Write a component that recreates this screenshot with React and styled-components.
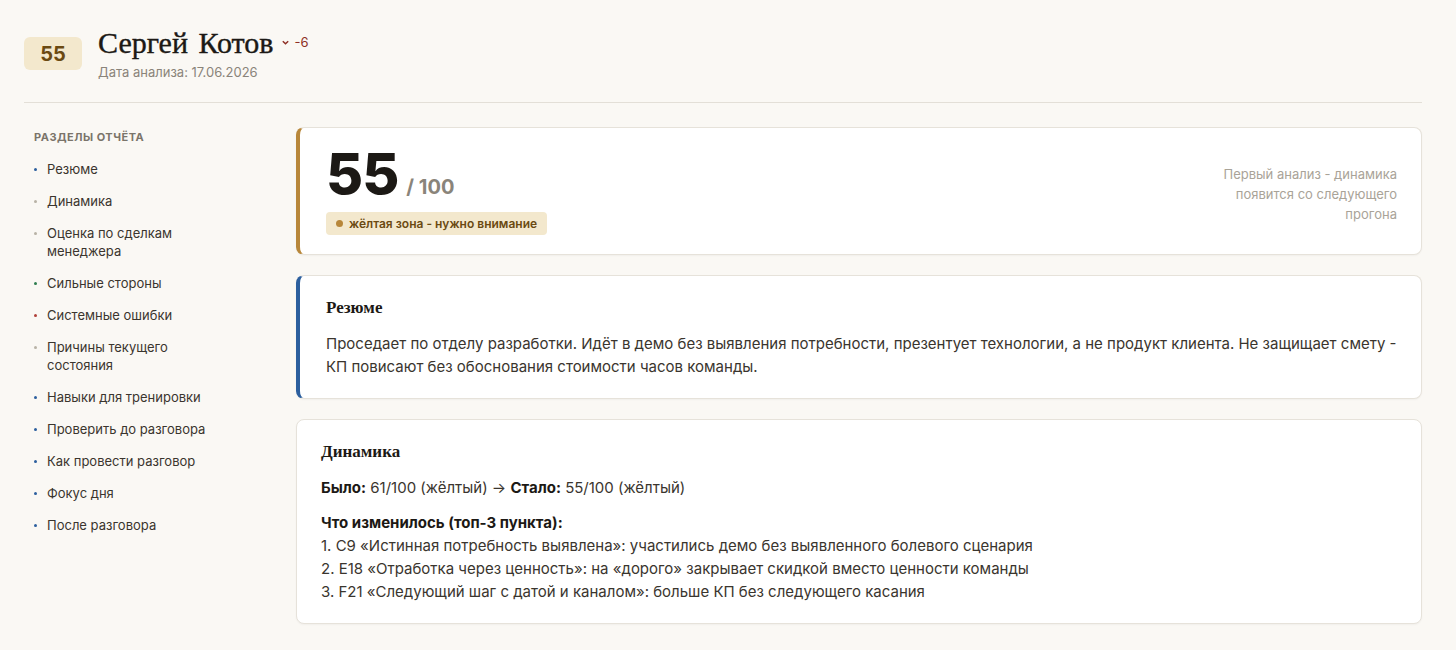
import React from 'react';
import styled, { createGlobalStyle } from 'styled-components';

const Global = createGlobalStyle`
  body { margin: 0; background: #faf8f4; font-family: Inter, "Noto Sans", sans-serif; color: #2a2620; }
`;

const Page = styled.div`
  padding: 26px 34px 120px 24px;
`;

const Header = styled.header`
  display: flex;
  align-items: flex-start;
  gap: 16px;
  padding-bottom: 22px;
  border-bottom: 1px solid #e3dfd7;
`;

const ScoreBadge = styled.div`
  margin-top: 11px;
  width: 58px;
  height: 33px;
  border-radius: 6px;
  background: #f3e8cd;
  color: #6b4a12;
  font-weight: 700;
  font-size: 20px;
  display: flex;
  align-items: center;
  justify-content: center;
`;

const NameRow = styled.div`
  display: flex;
  align-items: center;
  gap: 8px;
`;

const Name = styled.h1`
  margin: 0;
  font-family: "Liberation Serif", "DejaVu Serif", serif;
  font-weight: 400;
  font-size: 30px;
  line-height: 34px;
  word-spacing: 3px;
  color: #1c1915;
  -webkit-text-stroke: 0.4px #1c1915;
`;

const Delta = styled.span`
  display: flex;
  align-items: center;
  gap: 4px;
  font-size: 13px;
  color: #8e2f25;
  margin-top: -2px;
`;

const DateLine = styled.div`
  font-size: 13px;
  color: #8a847a;
  margin-top: 4px;
`;

const Body = styled.div`
  display: grid;
  grid-template-columns: 272px 1fr;
  padding-top: 24px;
`;

const Nav = styled.nav`
  padding: 3px 0 0 10px;
`;

const NavTitle = styled.div`
  font-size: 11px;
  font-weight: 700;
  letter-spacing: 0.5px;
  color: #7a746a;
  margin-bottom: 16px;
`;

const NavList = styled.ul`
  list-style: none;
  margin: 0;
  padding: 0;
  display: flex;
  flex-direction: column;
  gap: 14px;
`;

const NavItem = styled.li`
  position: relative;
  padding-left: 13px;
  width: 170px;
  font-size: 13px;
  line-height: 18px;
  color: #3a352e;
  &::before {
    content: '';
    position: absolute;
    left: 0;
    top: 8px;
    width: 3px;
    height: 3px;
    border-radius: 50%;
    background: ${p => p.$dot};
  }
`;

const Main = styled.main`
  display: flex;
  flex-direction: column;
  gap: 20px;
`;

const Card = styled.section`
  background: #fff;
  border: 1px solid #e6e2da;
  border-left: ${p => (p.$accent ? `4px solid ${p.$accent}` : '1px solid #e6e2da')};
  border-radius: 8px;
  padding: ${p => (p.$accent ? '22px 24px 20px 26px' : '22px 24px 20px 24px')};
  box-shadow: 0 1px 2px rgba(0,0,0,0.04);
`;

const ScoreCard = styled(Card)`
  display: flex;
  justify-content: space-between;
  padding-top: 20px;
  padding-bottom: 19px;
`;

const BigScore = styled.div`
  display: flex;
  align-items: baseline;
  gap: 8px;
`;

const Big = styled.span`
  font-size: 57px;
  font-weight: 800;
  color: #1c1915;
  line-height: 52px;
  letter-spacing: -1px;
`;

const OutOf = styled.span`
  font-size: 20px;
  font-weight: 700;
  color: #8a847a;
`;

const Zone = styled.span`
  display: inline-flex;
  align-items: center;
  gap: 6px;
  margin-top: 12px;
  padding: 4px 10px;
  background: #f3e8cd;
  border-radius: 4px;
  font-size: 12px;
  font-weight: 600;
  color: #6b4a12;
  &::before {
    content: '';
    width: 7px;
    height: 7px;
    border-radius: 50%;
    background: #b8873a;
  }
`;

const Hint = styled.div`
  width: 190px;
  text-align: right;
  font-size: 13px;
  line-height: 20px;
  color: #a9a398;
  padding-top: 16px;
`;

const CardTitle = styled.h2`
  margin: 0 0 14px;
  font-family: "Liberation Serif", "DejaVu Serif", serif;
  font-weight: 700;
  font-size: 17px;
  color: #1c1915;
`;

const Text = styled.p`
  margin: 0 0 ${p => p.$gap || 0}px;
  font-size: 15px;
  line-height: 23px;
  color: #3a352e;
  b { color: #1c1915; font-weight: 700; }
`;

const nav = [
  ['Резюме', '#2c5f9e'],
  ['Динамика', '#b8b2a6'],
  ['Оценка по сделкам менеджера', '#b8b2a6'],
  ['Сильные стороны', '#2e7d4f'],
  ['Системные ошибки', '#b0403a'],
  ['Причины текущего состояния', '#b8b2a6'],
  ['Навыки для тренировки', '#2c5f9e'],
  ['Проверить до разговора', '#2c5f9e'],
  ['Как провести разговор', '#2c5f9e'],
  ['Фокус дня', '#2c5f9e'],
  ['После разговора', '#2c5f9e'],
];

export default function App() {
  return (
    <Page>
      <Global />
      <Header>
        <ScoreBadge>55</ScoreBadge>
        <div>
          <NameRow>
            <Name>Сергей Котов</Name>
            <Delta>
              <svg width="9" height="9" viewBox="0 0 10 10"><path d="M2 3.5 5 6.5 8 3.5" fill="none" stroke="#8e2f25" strokeWidth="1.6" /></svg>
              -6
            </Delta>
          </NameRow>
          <DateLine>Дата анализа: 17.06.2026</DateLine>
        </div>
      </Header>
      <Body>
        <Nav>
          <NavTitle>РАЗДЕЛЫ ОТЧЁТА</NavTitle>
          <NavList>
            {nav.map(([t, c]) => <NavItem key={t} $dot={c}>{t}</NavItem>)}
          </NavList>
        </Nav>
        <Main>
          <ScoreCard $accent="#b8873a">
            <div>
              <BigScore><Big>55</Big><OutOf>/ 100</OutOf></BigScore>
              <Zone>жёлтая зона - нужно внимание</Zone>
            </div>
            <Hint>Первый анализ - динамика появится со следующего прогона</Hint>
          </ScoreCard>
          <Card $accent="#2c5f9e">
            <CardTitle>Резюме</CardTitle>
            <Text>Проседает по отделу разработки. Идёт в демо без выявления потребности, презентует технологии, а не продукт клиента. Не защищает смету - КП повисают без обоснования стоимости часов команды.</Text>
          </Card>
          <Card>
            <CardTitle>Динамика</CardTitle>
            <Text $gap={12}><b>Было:</b> 61/100 (жёлтый) → <b>Стало:</b> 55/100 (жёлтый)</Text>
            <Text><b>Что изменилось (топ-3 пункта):</b></Text>
            <Text>1. C9 «Истинная потребность выявлена»: участились демо без выявленного болевого сценария</Text>
            <Text>2. E18 «Отработка через ценность»: на «дорого» закрывает скидкой вместо ценности команды</Text>
            <Text>3. F21 «Следующий шаг с датой и каналом»: больше КП без следующего касания</Text>
          </Card>
        </Main>
      </Body>
    </Page>
  );
}
